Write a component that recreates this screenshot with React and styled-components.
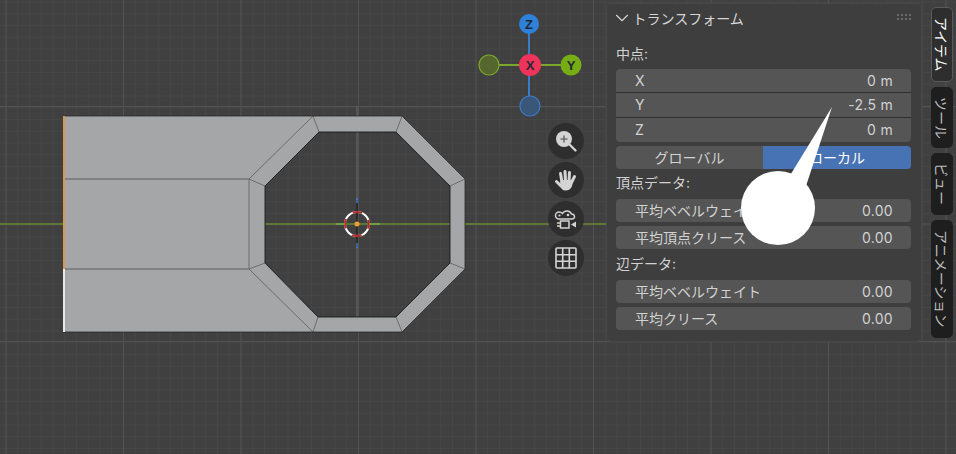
import React from 'react'
import styled, { createGlobalStyle } from 'styled-components'
import { ChevronDown } from 'lucide-react'

const GlobalStyle = createGlobalStyle`
  html, body {
    margin: 0;
    padding: 0;
    background: #3f3f3f;
  }
  * { box-sizing: border-box; }
`

const Viewport = styled.div`
  position: relative;
  width: 956px;
  height: 454px;
  overflow: hidden;
  font-family: Inter, "Noto Sans CJK JP", "Noto Sans", sans-serif;
  background-color: #404040;
  background-image:
    linear-gradient(to right, #525252 1px, transparent 1px),
    linear-gradient(to bottom, #525252 1px, transparent 1px),
    linear-gradient(to right, #464646 1px, transparent 1px),
    linear-gradient(to bottom, #464646 1px, transparent 1px);
  background-size: 117.5px 117.5px, 117.5px 117.5px, 11.75px 11.75px, 11.75px 11.75px;
  background-position: 5.5px 0, 0 106px, 5.5px 0, 0 1.5px;
`

const Drawing = styled.svg`
  position: absolute;
  left: 0;
  top: 0;
  width: 956px;
  height: 454px;
`

const NavColumn = styled.div`
  position: absolute;
  left: 548px;
  top: 123px;
  display: flex;
  flex-direction: column;
  gap: 3px;
`

const NavButton = styled.div`
  width: 36px;
  height: 36px;
  border-radius: 50%;
  background: rgba(44, 44, 44, 0.9);
  display: flex;
  align-items: center;
  justify-content: center;
`

const Sidebar = styled.div`
  position: absolute;
  top: 3px;
  left: 606px;
  display: flex;
  align-items: flex-start;
  gap: 9px;
`

const Panel = styled.section`
  width: 316px;
  height: 339px;
  padding: 0 10px 0 9px;
  background: #3e3e3e;
  border: 1px solid #484848;
  border-radius: 5px;
  color: #d2d2d2;
`

const PanelHeader = styled.header`
  height: 27px;
  display: flex;
  align-items: center;
  font-size: 14px;
  color: #d6d6d6;
  margin-left: -5.5px;
`

const Grip = styled.svg`
  margin-left: auto;
  margin-right: -1px;
`

const GroupLabel = styled.div`
  height: 22px;
  line-height: 22px;
  font-size: 14px;
  margin-top: ${p => p.$top}px;
  margin-bottom: ${p => p.$bottom}px;
`

const FieldGroup = styled.div`
  display: flex;
  flex-direction: column;
  gap: 1px;
  background: #2f2f2f;
  border-radius: 4px;
  overflow: hidden;
`

const Row = styled.div`
  height: ${p => p.$height || 23}px;
  margin-bottom: ${p => p.$gap || 0}px;
  padding: 0 18px 1px 19px;
  display: flex;
  align-items: center;
  justify-content: space-between;
  background: #555555;
  border-radius: ${p => (p.$square ? 0 : 4)}px;
  font-size: 14px;
  color: #d2d2d2;
`

const Value = styled.span`
  letter-spacing: 0.3px;
`

const Toggle = styled.div`
  display: flex;
  height: 23px;
  margin-top: 4px;
  border-radius: 4px;
  overflow: hidden;
`

const ToggleItem = styled.div`
  flex: ${p => p.$grow};
  display: flex;
  align-items: center;
  justify-content: center;
  padding-bottom: 2px;
  font-size: 14px;
  background: ${p => (p.$active ? '#4772b3' : '#555555')};
  color: ${p => (p.$active ? '#ffffff' : '#d2d2d2')};
`

const Tabs = styled.nav`
  display: flex;
  flex-direction: column;
  gap: 5px;
  margin-top: 4px;
`

const Tab = styled.div`
  width: 22px;
  height: ${p => p.$height}px;
  display: flex;
  align-items: center;
  justify-content: center;
  writing-mode: vertical-rl;
  text-orientation: sideways;
  font-size: 14px;
  border-radius: 5px;
  background: ${p => (p.$active ? '#2e2e2e' : '#1e1e1e')};
  border: 1px solid ${p => (p.$active ? '#5a5a5a' : '#1e1e1e')};
  color: ${p => (p.$active ? '#ffffff' : '#bcbcbc')};
`

const GizmoText = styled.text`
  font-family: "Liberation Sans", sans-serif;
  font-size: 13px;
  font-weight: 700;
  fill: #1d2a36;
  text-anchor: middle;
`

const GridGlyph = () => (
  <svg width="24" height="24" viewBox="0 0 24 24" fill="none" stroke="#d4d4d4" strokeWidth="1.6">
    <rect x="2" y="2" width="20" height="20" rx="1" />
    <path d="M8.7 2v20M15.3 2v20M2 8.7h20M2 15.3h20" />
  </svg>
)

const ZoomGlyph = () => (
  <svg width="26" height="26" viewBox="0 0 26 26">
    <path d="M15 15l7.500 7.500" stroke="#d4d4d4" strokeWidth="2.400" strokeLinecap="round" />
    <circle cx="11" cy="11" r="8" fill="#d4d4d4" />
    <path d="M7.500 11h7M11 7.500v7" stroke="#6d6d6d" strokeWidth="1.600" />
  </svg>
)

const HandGlyph = () => (
  <svg width="26" height="26" viewBox="0 0 26 26" fill="none" stroke="#d4d4d4" strokeLinecap="round">
    <path d="M9 15L7.500 6.500M12.500 14L12 4.500M16 14L16.500 5.500M18.500 15.500L21.500 9.500" strokeWidth="3" />
    <path d="M8 19L3.500 14.500" strokeWidth="3" />
    <path d="M7.500 13h11.500l.5 4c-.5 3.500-2.500 6.500-6.500 6.500-3.500 0-5-2-6-5z" fill="#d4d4d4" stroke="none" />
  </svg>
)

const CameraGlyph = () => (
  <svg width="28" height="28" viewBox="0 0 28 28" fill="none" stroke="#d4d4d4" strokeWidth="1.500">
    <path d="M7 14a3.500 3.500 0 0 1 0-7c1.500 0 2.500.5 3.500 1.500a5 5 0 0 1 9 .5a3 3 0 0 1 3 2.500c.2 1.500-1 2.500-2.500 2.500z" />
    <circle cx="7.500" cy="10.500" r="1.100" fill="#d4d4d4" stroke="none" />
    <circle cx="16" cy="10" r="1.300" fill="#d4d4d4" stroke="none" />
    <rect x="8.500" y="16" width="8.500" height="7" />
    <path d="M5 18h3.500M5 21h3.500" />
    <path d="M24 16.500v6l-5-3z" fill="#d4d4d4" stroke="none" />
  </svg>
)

const Scene = () => (
  <Drawing viewBox="0 0 956 454">
    {/* axis lines under the mesh */}
    <path d="M357 106V324" stroke="#6a6a6a" strokeWidth="1" />
    <path d="M0 224H606" stroke="#64872f" strokeWidth="1.600" />

    <path
      fillRule="evenodd"
      fill="#a5a6a7"
      d="M63 116H402L465 179V269L402 332H63Z M319 132L265 186V263L318 317H396L450 263V186L396 132Z"
    />
    <path d="M63 179H249M63 269H249" stroke="#555" strokeWidth="0.900" />
    <path d="M249 179V269" stroke="#777" strokeWidth="1.200" />
    <path d="M249 179L313 116M249 269L313 332" stroke="#444" strokeWidth="0.600" />
    <path
      d="M319 132L313 116M396 132L402 116M450 186L465 179M450 263L465 269M396 317L402 332M318 317L313 332M265 263L249 269M265 186L249 179"
      stroke="#555"
      strokeWidth="0.700"
    />
    <path d="M63 116H402L465 179V269L402 332H63" fill="none" stroke="#2a2a2a" strokeWidth="0.800" />
    <path d="M319 132L265 186V263L318 317H396L450 263V186L396 132Z" fill="none" stroke="#1c1c1c" strokeWidth="0.900" />
    <path d="M64 116V269" stroke="#d9984f" strokeWidth="2" />
    <path d="M64 269V332" stroke="#e8e8e8" strokeWidth="2" />

    {/* 3d cursor */}
    <path d="M357 200V247" stroke="#111" strokeWidth="1.200" />
    <path d="M357 198V203M357 243V248" stroke="#3f7fd0" strokeWidth="1.400" />
    <circle cx="357" cy="224" r="12" fill="none" stroke="#ffffff" strokeWidth="2" />
    <circle cx="357" cy="224" r="12" fill="none" stroke="#b02c2c" strokeWidth="2.200" strokeDasharray="9.420 9.420" strokeDashoffset="4.700" />
    <path d="M336 224h9M369 224h11" stroke="#7fa84a" strokeWidth="1.600" />
    <circle cx="357" cy="224" r="2.500" fill="#f0a030" />

    {/* navigation gizmo */}
    <path d="M529 24V107" stroke="#3b7bc8" strokeWidth="2" />
    <path d="M489 65H571" stroke="#7ba82a" strokeWidth="2" />
    <circle cx="489" cy="65" r="10" fill="#56662f" stroke="#7ba82a" strokeWidth="1.200" />
    <circle cx="530" cy="106" r="10" fill="#3a5779" stroke="#3b7bc8" strokeWidth="1.200" />
    <circle cx="529" cy="24" r="10" fill="#2f80d8" />
    <circle cx="571" cy="65" r="10.500" fill="#76ad16" />
    <circle cx="530" cy="65" r="11" fill="#f0335a" />
    <GizmoText x="529" y="29">Z</GizmoText>
    <GizmoText x="571" y="70">Y</GizmoText>
    <GizmoText x="530" y="70">X</GizmoText>
  </Drawing>
)

const Callout = () => (
  <Drawing viewBox="0 0 956 454">
    <path d="M832 107L786 182L806 186Z" fill="#fff" />
    <circle cx="778" cy="208" r="37" fill="#fff" />
  </Drawing>
)

const App = () => {
  return (
    <Viewport>
      <GlobalStyle />
      <Scene />
      <NavColumn>
        <NavButton><ZoomGlyph /></NavButton>
        <NavButton><HandGlyph /></NavButton>
        <NavButton><CameraGlyph /></NavButton>
        <NavButton><GridGlyph /></NavButton>
      </NavColumn>
      <Sidebar>
        <Panel>
          <PanelHeader>
            <ChevronDown size={22} strokeWidth={1.2} />
            トランスフォーム
            <Grip width="15" height="7" viewBox="0 0 15 7" fill="#6a6a6a">
              {[0, 4, 8, 12].map(x => [0, 4].map(y => <rect key={x + '-' + y} x={x} y={y} width="2" height="2" />))}
            </Grip>
          </PanelHeader>
          <GroupLabel $top={12} $bottom={4}>中点:</GroupLabel>
          <FieldGroup>
            <Row $square><span>X</span><Value>0 m</Value></Row>
            <Row $square $height={24}><span>Y</span><Value>-2.5 m</Value></Row>
            <Row $square $height={24}><span>Z</span><Value>0 m</Value></Row>
          </FieldGroup>
          <Toggle>
            <ToggleItem $grow={147}>グローバル</ToggleItem>
            <ToggleItem $grow={148} $active>ローカル</ToggleItem>
          </Toggle>
          <GroupLabel $top={3} $bottom={5}>頂点データ:</GroupLabel>
          <Row $gap={4}><span>平均ベベルウェイト</span><Value>0.00</Value></Row>
          <Row><span>平均頂点クリース</span><Value>0.00</Value></Row>
          <GroupLabel $top={4} $bottom={5}>辺データ:</GroupLabel>
          <Row $gap={4}><span>平均ベベルウェイト</span><Value>0.00</Value></Row>
          <Row><span>平均クリース</span><Value>0.00</Value></Row>
        </Panel>
        <Tabs>
          <Tab $active $height={75}>アイテム</Tab>
          <Tab $height={61}>ツール</Tab>
          <Tab $height={62}>ビュー</Tab>
          <Tab $height={118}>アニメーション</Tab>
        </Tabs>
      </Sidebar>
      <Callout />
    </Viewport>
  )
}

export default App
